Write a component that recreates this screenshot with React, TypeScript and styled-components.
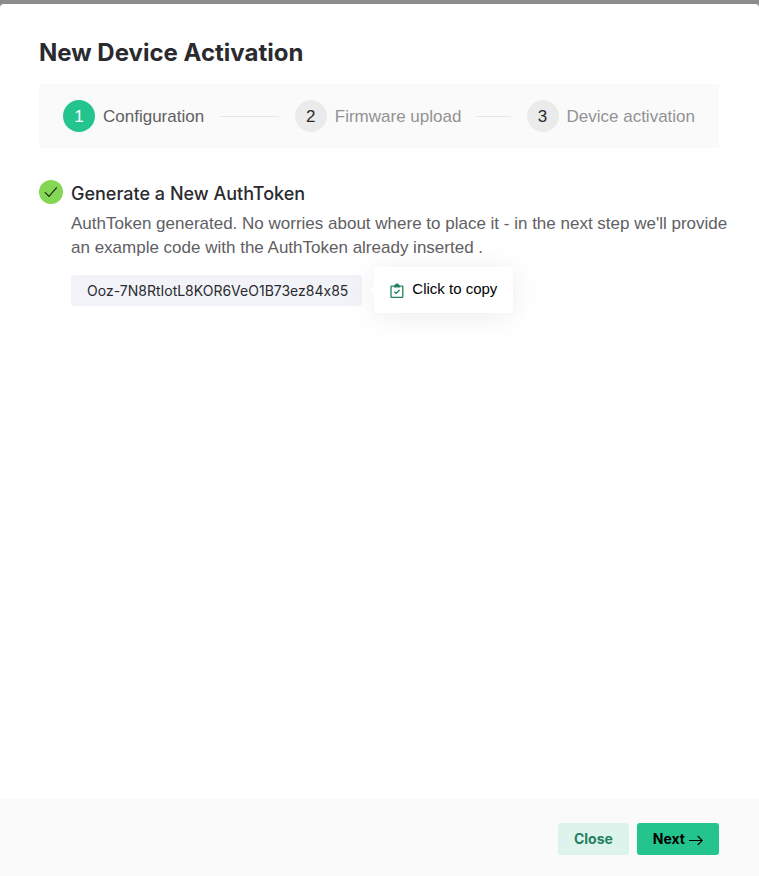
import React from "react";
import styled, { createGlobalStyle } from "styled-components";

const GlobalStyle = createGlobalStyle`
  *, *::before, *::after { box-sizing: border-box; }
  body {
    margin: 0;
    background: #8c8c8c;
    color: #2a2a2f;
    font: 17px/24px "Liberation Sans", Arial, sans-serif;
  }
  h1, h2, p, ol { margin: 0; padding: 0; }
  button { font: inherit; border: 0; cursor: pointer; }
`;

const Backdrop = styled.div`
  display: flex;
  min-height: 100vh;
  padding-top: 4px;
`;

const Dialog = styled.section`
  display: flex;
  flex: 1;
  flex-direction: column;
  background: #fff;
  border-radius: 4px 4px 0 0;
`;

const Body = styled.div`
  flex: 1;
  padding: 32px 40px 32px 39px;
`;

const Title = styled.h1`
  font-family: Inter, sans-serif;
  font-size: 24px;
  line-height: 34px;
  font-weight: 700;
`;

const Steps = styled.ol`
  display: flex;
  gap: 16px;
  margin-top: 14px;
  padding: 16px 24px;
  background: #fafafa;
  list-style: none;
`;

const Step = styled.li<{ $active?: boolean }>`
  display: flex;
  flex: 1;
  align-items: center;
  gap: 8px;
  color: ${(p) => (p.$active ? "#606063" : "#929294")};
  white-space: nowrap;

  &:not(:last-child)::after {
    content: "";
    flex: 1;
    height: 1px;
    margin-left: 8px;
    background: #e6e6e6;
  }

  &:last-child { flex: none; }
`;

const StepNumber = styled.span<{ $active?: boolean }>`
  display: flex;
  align-items: center;
  justify-content: center;
  width: 32px;
  height: 32px;
  padding-top: 2px;
  border-radius: 50%;
  background: ${(p) => (p.$active ? "#24c48e" : "#ebebeb")};
  color: ${(p) => (p.$active ? "#fff" : "#2a2a2f")};
`;

const StepLabel = styled.span`
  padding-top: 2px;
`;

const Task = styled.section`
  display: flex;
  gap: 8px;
  margin-top: 32px;
`;

const Status = styled.span`
  display: flex;
  flex: none;
  align-items: center;
  justify-content: center;
  width: 24px;
  height: 24px;
  border-radius: 50%;
  background: #83d754;
`;

const TaskBody = styled.div`
  flex: 1;
  margin-right: -16px;
`;

const TaskTitle = styled.h2`
  padding-top: 2px;
  font-family: Inter, sans-serif;
  font-size: 18px;
  line-height: 24px;
  font-weight: 500;
`;

const Description = styled.p`
  margin-top: 6px;
  color: #606063;
`;

const TokenRow = styled.div`
  display: flex;
  align-items: center;
  margin-top: 15px;
`;

const Token = styled.button`
  position: relative;
  height: 31px;
  padding: 0 14px 0 16px;
  border-radius: 3px;
  background: #f2f3f8;
  color: #2a2a2f;
  font-family: Inter, sans-serif;
  font-size: 14px;
  font-feature-settings: "calt" 0;
`;

const Tooltip = styled.span`
  position: absolute;
  left: calc(100% + 12px);
  top: -8px;
  display: flex;
  align-items: center;
  gap: 8px;
  height: 46px;
  padding: 0 16px;
  border-radius: 3px;
  background: #fff;
  box-shadow: 0 3px 30px rgba(0, 0, 0, 0.08);
  color: #000;
  font-family: "Liberation Sans", Arial, sans-serif;
  font-size: 15px;
  white-space: nowrap;

  &::before {
    content: "";
    position: absolute;
    left: -3px;
    top: 20px;
    width: 6px;
    height: 6px;
    background: #fff;
    transform: rotate(45deg);
  }
`;

const TooltipLabel = styled.span`
  padding-bottom: 2px;
`;

const Footer = styled.footer`
  display: flex;
  justify-content: flex-end;
  gap: 8px;
  padding: 24px 40px 21px;
  background: #fafafa;
`;

const Button = styled.button<{ $primary?: boolean }>`
  display: flex;
  align-items: center;
  gap: 4px;
  height: 32px;
  padding: 0 16px;
  border-radius: 3px;
  background: ${(p) => (p.$primary ? "#24c48e" : "#dcf4ec")};
  color: ${(p) => (p.$primary ? "#000" : "#24805f")};
  font-family: Inter, sans-serif;
  font-size: 14px;
  font-weight: 700;
`;

const CheckIcon = () => (
  <svg width="24" height="24" viewBox="0 0 24 24" fill="none" stroke="#1c2e18" strokeWidth="1.2" aria-hidden="true">
    <path d="M5.8 12.2 10 16.4 17.8 7.3" />
  </svg>
);

const ClipboardIcon = () => (
  <svg width="14" height="16" viewBox="0 -1 14 16" fill="none" stroke="#24805f" strokeWidth="1.3" aria-hidden="true">
    <path d="M3.5 3.1H1.6Q1 3.1 1 3.7V13.7Q1 14.3 1.6 14.3H12.2Q12.8 14.3 12.8 13.7V3.7Q12.8 3.1 12.2 3.1H10.5" />
    <path d="M3.6 4.4V2.3H4.6Q5.2 .6 7 .6Q8.8 .6 9.4 2.3H10.4V4.4Z" fill="#24805f" stroke="none" />
    <path d="M4.4 8.8 6.1 10.3 9.6 7" />
  </svg>
);

const ArrowIcon = () => (
  <svg width="14" height="14" viewBox="0 0 14 14" fill="none" stroke="#000" strokeWidth="1.2" aria-hidden="true">
    <path d="M0 8.5H13M8.7 4 13.2 8.5 8.7 13" />
  </svg>
);

const steps = ["Configuration", "Firmware upload", "Device activation"];

export default function App() {
  return (
    <>
      <GlobalStyle />
      <Backdrop>
        <Dialog role="dialog" aria-labelledby="dialog-title">
          <Body>
            <Title id="dialog-title">New Device Activation</Title>
            <Steps>
              {steps.map((label, index) => (
                <Step key={label} $active={index === 0} aria-current={index === 0 ? "step" : undefined}>
                  <StepNumber $active={index === 0}>{index + 1}</StepNumber>
                  <StepLabel>{label}</StepLabel>
                </Step>
              ))}
            </Steps>
            <Task>
              <Status>
                <CheckIcon />
              </Status>
              <TaskBody>
                <TaskTitle>Generate a New AuthToken</TaskTitle>
                <Description>
                  AuthToken generated. No worries about where to place it - in the next step we'll provide an example
                  code with the AuthToken already inserted .
                </Description>
                <TokenRow>
                  <Token type="button" aria-describedby="copy-hint">
                    Ooz-7N8RtIotL8KOR6VeO1B73ez84x85
                    <Tooltip id="copy-hint" role="tooltip">
                      <ClipboardIcon />
                      <TooltipLabel>Click to copy</TooltipLabel>
                    </Tooltip>
                  </Token>
                </TokenRow>
              </TaskBody>
            </Task>
          </Body>
          <Footer>
            <Button type="button">Close</Button>
            <Button type="button" $primary>
              Next
              <ArrowIcon />
            </Button>
          </Footer>
        </Dialog>
      </Backdrop>
    </>
  );
}
